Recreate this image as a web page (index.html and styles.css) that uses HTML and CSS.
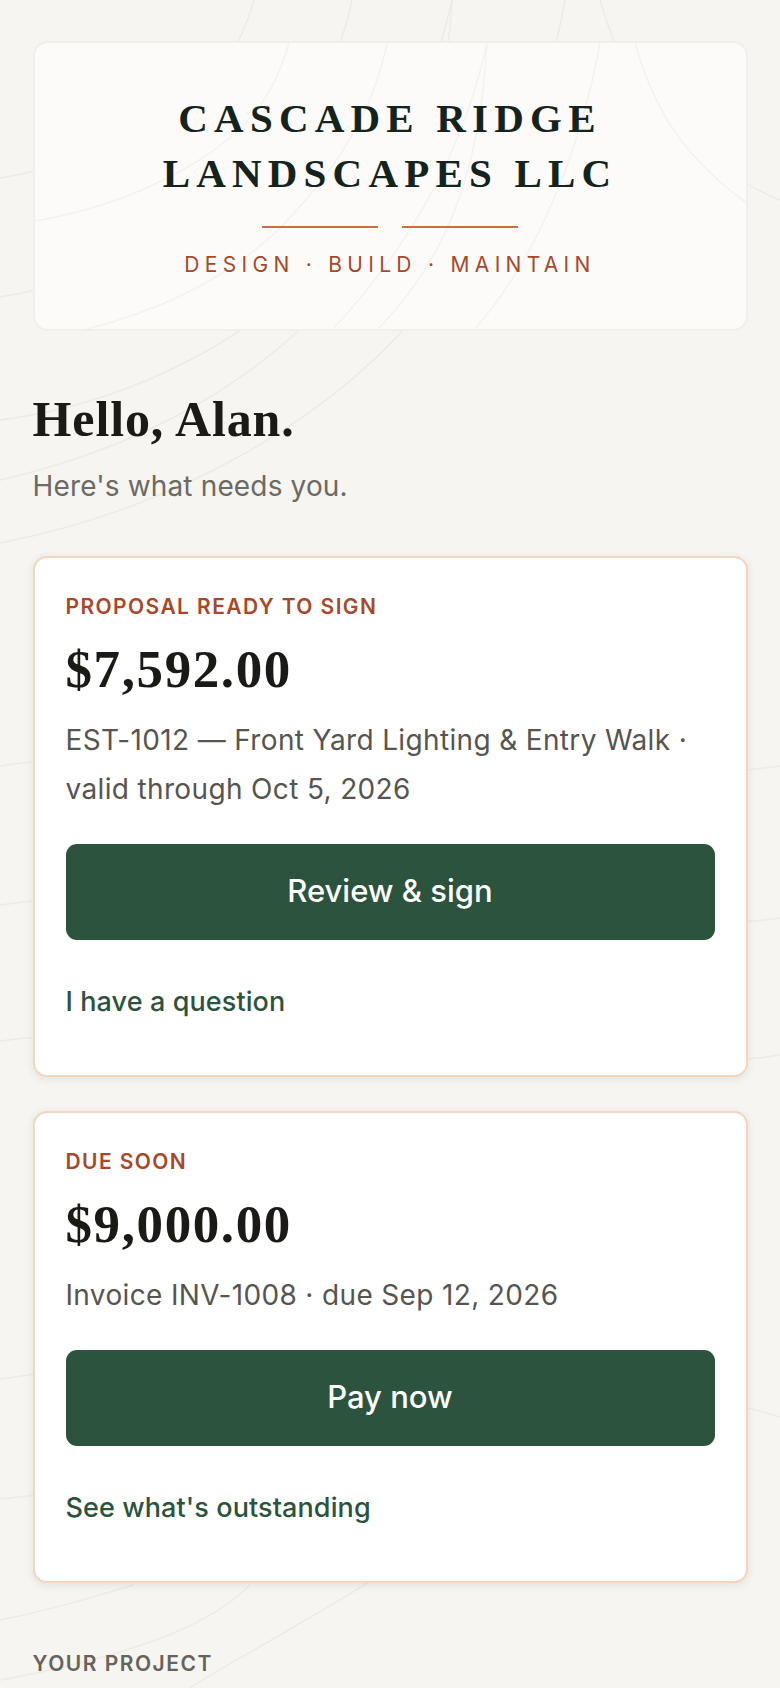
FILE: index.html
```html
<!DOCTYPE html>
<html>
    <head>
        <link rel="stylesheet" href="styles.css">
    </head>
    <body>
        <svg class="contours contoursPage" width="780" height="1688" viewBox="0 0 780 1688" aria-hidden="true">
            <symbol id="contourLines" viewBox="0 0 780 1688">
                <path d="M254 0 C240 50 215 85 166 116 C115 148 60 168 0 178"/>
                <path d="M352 0 C338 70 300 130 240 190 C180 245 100 280 0 297"/>
                <path d="M452 0 C430 100 380 200 295 289 C225 350 120 405 0 420"/>
                <path d="M452 0 C445 130 410 220 340 289 C250 390 130 450 0 480"/>
                <path d="M565 0 C545 110 500 220 437 289 C340 420 170 510 0 543"/>
                <path d="M600 0 C620 70 650 115 714 162 C735 178 755 190 780 200"/>
                <path d="M0 766 C240 730 540 800 780 766"/>
                <path d="M0 905 C240 870 540 950 780 918"/>
                <path d="M0 1041 C240 1010 540 1090 780 1055"/>
                <path d="M0 1379 C260 1340 560 1350 780 1417"/>
                <path d="M0 1499 C260 1470 540 1440 640 1380"/>
                <path d="M0 1620 C50 1610 90 1598 133 1585"/>
                <path d="M0 1680 C50 1672 117 1653 117 1653 C160 1640 215 1620 250 1585"/>
                <path d="M190 1688 C225 1665 265 1645 300 1623 C350 1595 380 1575 420 1550"/>
            </symbol>
            <use href="#contourLines" width="780" height="1688"/>
        </svg>
        <div id="container">
            <div class="brandCard">
                <svg class="contours contoursCard" width="780" height="1688" viewBox="0 0 780 1688" aria-hidden="true">
                    <use href="#contourLines" width="780" height="1688"/>
                </svg>
                <div class="brandName">CASCADE RIDGE<br>LANDSCAPES LLC</div>
                <div class="brandRule">
                    <span></span>
                    <span></span>
                </div>
                <div class="brandTagline">DESIGN · BUILD · MAINTAIN</div>
            </div>

            <div class="greetingBlock">
                <h1 class="greeting">Hello, Alan.</h1>
                <p class="greetingSub">Here's what needs you.</p>
            </div>

            <div class="actionCard">
                <div class="eyebrow">PROPOSAL READY TO SIGN</div>
                <div class="amount">$7,592.00</div>
                <p class="detail">EST-1012 — Front Yard Lighting &amp; Entry Walk · valid through Oct 5, 2026</p>
                <a class="primaryButton">Review &amp; sign</a>
                <a class="textLink">I have a question</a>
            </div>

            <div class="actionCard">
                <div class="eyebrow">DUE SOON</div>
                <div class="amount">$9,000.00</div>
                <p class="detail">Invoice INV-1008 · due Sep 12, 2026</p>
                <a class="primaryButton">Pay now</a>
                <a class="textLink">See what's outstanding</a>
            </div>

            <div class="sectionLabel">YOUR PROJECT</div>
        </div>
    </body>
</html>
```

FILE: styles.css
```css
html, body {
    margin: 0;
    padding: 0;
    height: 1688px;
    overflow: hidden;
    background: #f6f5f1;
}
body {
    position: relative;
    font-family: "Inter", "Liberation Sans", sans-serif;
}
.contours {
    position: absolute;
    left: 0;
    top: 0;
    fill: none;
    stroke-width: 1.5px;
}
.contoursPage {
    stroke: #ecebe6;
}
.contoursCard {
    stroke: #f3f2ef;
}
#container {
    position: relative;
    padding: 41px 32.5px 0 32.5px;
}
.brandCard {
    position: relative;
    overflow: hidden;
    height: 286px;
    background: #fcfbf9;
    border: 2px solid #f0efeb;
    border-radius: 15px;
    text-align: center;
}
.brandName {
    position: relative;
    margin-top: 48px;
    font-family: "Liberation Serif", serif;
    font-weight: bold;
    font-size: 41px;
    line-height: 55px;
    letter-spacing: 6.2px;
    color: #14241d;
}
.brandRule {
    position: relative;
    display: flex;
    justify-content: center;
    gap: 24px;
    margin-top: 25px;
}
.brandRule span {
    width: 116px;
    height: 2px;
    background: #c9703f;
}
.brandTagline {
    position: relative;
    margin-top: 24px;
    font-size: 21px;
    line-height: 26px;
    letter-spacing: 5.3px;
    color: #a8482a;
}
.greetingBlock {
    margin-bottom: 50px;
}
.greeting {
    margin: 58px 0 0 0;
    font-family: "Liberation Serif", serif;
    font-weight: bold;
    font-size: 50px;
    line-height: 60px;
    letter-spacing: 0.9px;
    color: #1b1a16;
}
.greetingSub {
    margin: 17px 0 0 0;
    font-size: 28px;
    line-height: 40px;
    letter-spacing: 0.15px;
    color: #6d6a62;
}
.actionCard {
    margin-top: 34px;
    padding: 36px 31px 54px 31px;
    background: #fff;
    border: 2px solid #f2d6bd;
    border-radius: 14px;
    box-shadow: 0 2px 8px rgba(60, 50, 30, 0.1);
}
.eyebrow {
    font-size: 21px;
    line-height: 26px;
    font-weight: 600;
    letter-spacing: 1.4px;
    color: #a8482a;
}
.amount {
    margin-top: 17px;
    font-family: "Liberation Serif", serif;
    font-weight: bold;
    font-size: 53px;
    line-height: 64px;
    letter-spacing: 1.6px;
    color: #1b1a16;
}
.detail {
    margin: 15px 0 0 0;
    font-size: 28px;
    line-height: 49px;
    letter-spacing: 0.35px;
    color: #57554f;
}
.primaryButton {
    display: block;
    margin-top: 30px;
    height: 96px;
    border-radius: 11px;
    background: #2c533d;
    color: #fff;
    font-size: 31px;
    font-weight: 500;
    line-height: 94px;
    text-align: center;
}
.textLink {
    display: block;
    margin-top: 43px;
    font-size: 27px;
    font-weight: 500;
    line-height: 38px;
    letter-spacing: 0.1px;
    color: #2c533d;
}
.sectionLabel {
    margin-top: 68px;
    font-size: 21px;
    line-height: 26px;
    font-weight: 600;
    letter-spacing: 1.5px;
    color: #66635b;
}
```
